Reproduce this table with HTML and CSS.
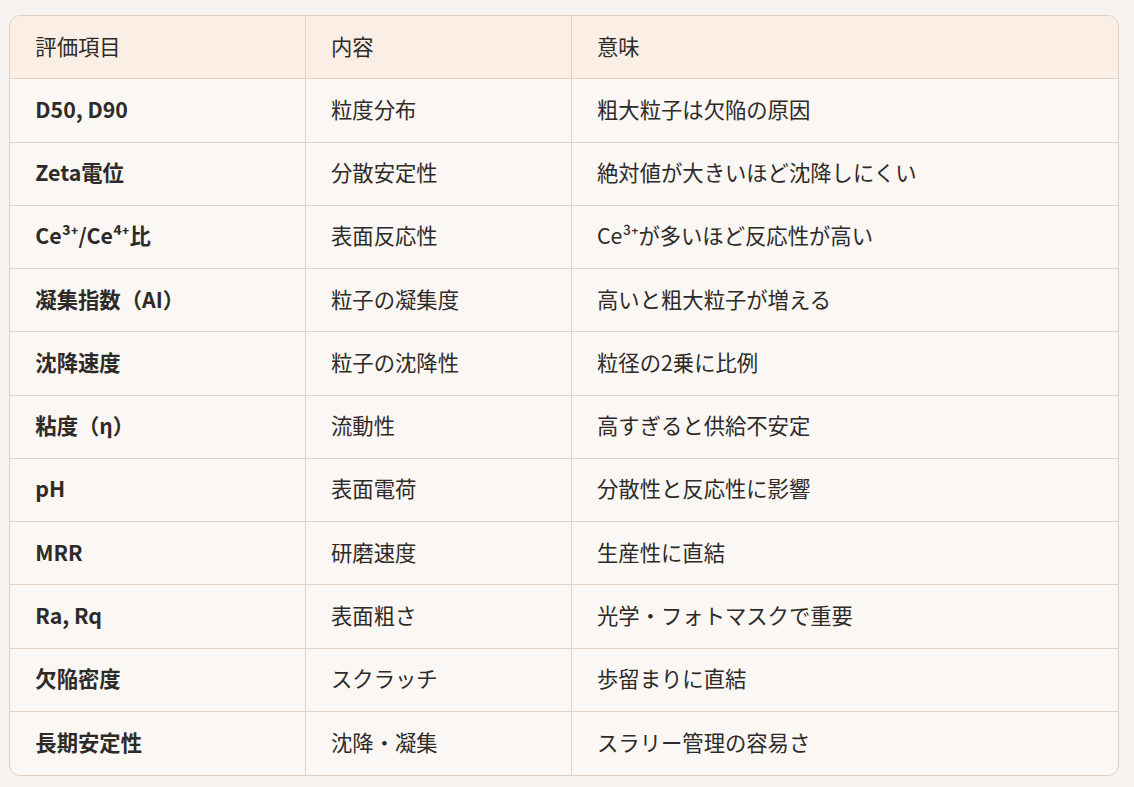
FILE: index.html
```html
<!DOCTYPE html>
<html lang="ja">
<head>
<meta charset="utf-8">
<title>評価項目</title>
<link rel="stylesheet" href="styles.css">
</head>
<body>
<div class="wrap">
  <div class="card">
    <table class="grid">
      <colgroup>
        <col class="c1"><col class="c2"><col class="c3">
      </colgroup>
      <thead>
        <tr><th>評価項目</th><th>内容</th><th>意味</th></tr>
      </thead>
      <tbody>
        <tr><td class="key">D50, D90</td><td>粒度分布</td><td>粗大粒子は欠陥の原因</td></tr>
        <tr><td class="key">Zeta電位</td><td>分散安定性</td><td>絶対値が大きいほど沈降しにくい</td></tr>
        <tr><td class="key">Ce³⁺/Ce⁴⁺比</td><td>表面反応性</td><td>Ce³⁺が多いほど反応性が高い</td></tr>
        <tr><td class="key">凝集指数（AI）</td><td>粒子の凝集度</td><td>高いと粗大粒子が増える</td></tr>
        <tr><td class="key">沈降速度</td><td>粒子の沈降性</td><td>粒径の2乗に比例</td></tr>
        <tr><td class="key">粘度（η）</td><td>流動性</td><td>高すぎると供給不安定</td></tr>
        <tr><td class="key">pH</td><td>表面電荷</td><td>分散性と反応性に影響</td></tr>
        <tr><td class="key">MRR</td><td>研磨速度</td><td>生産性に直結</td></tr>
        <tr><td class="key">Ra, Rq</td><td>表面粗さ</td><td>光学・フォトマスクで重要</td></tr>
        <tr><td class="key">欠陥密度</td><td>スクラッチ</td><td>歩留まりに直結</td></tr>
        <tr><td class="key">長期安定性</td><td>沈降・凝集</td><td>スラリー管理の容易さ</td></tr>
      </tbody>
    </table>
  </div>
</div>
</body>
</html>
```

FILE: styles.css
```css
html, body {
  margin: 0;
  padding: 0;
  background: #f6f3f0;
}
body {
  font-family: "Noto Sans CJK JP", "Noto Sans", sans-serif;
  color: #2e2a27;
}
.wrap {
  padding: 15px 14.67px 10px 9.33px;
}
.card {
  border: 1px solid #e0d0c3;
  border-radius: 11px;
  overflow: hidden;
  background: #faf7f4;
}
.grid {
  width: 100%;
  border-collapse: separate;
  border-spacing: 0;
  table-layout: fixed;
}
.c1 { width: 295.67px; }
.c2 { width: 266px; }
.grid th,
.grid td {
  box-sizing: border-box;
  height: 63.25px;
  padding: 0 25px 3px 25px;
  text-align: left;
  vertical-align: middle;
  font-size: 21.33px;
  line-height: 32px;
  white-space: nowrap;
  border-bottom: 1px solid #e3d3c6;
  border-right: 1px solid #e3d3c6;
}
.grid th:last-child,
.grid td:last-child {
  border-right: none;
}
.grid tbody tr:last-child td {
  border-bottom: none;
}
.grid th {
  font-weight: 400;
  background: #fbeee5;
}
.grid td.key {
  font-weight: 700;
}
```
